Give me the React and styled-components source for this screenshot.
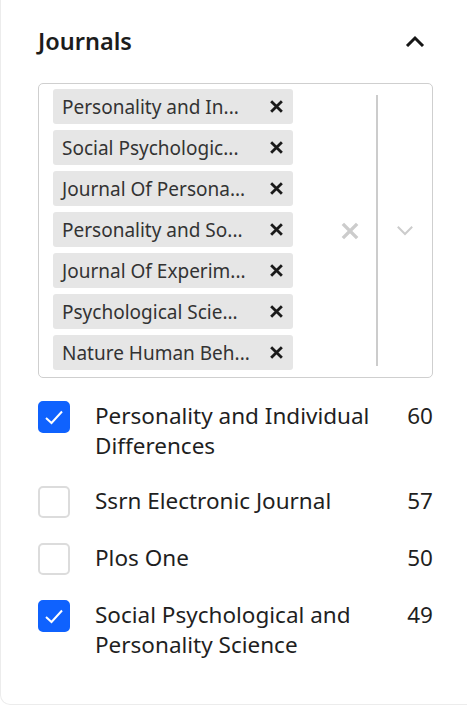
import styled, { createGlobalStyle } from "styled-components";

const GlobalStyle = createGlobalStyle`
  html, body {
    margin: 0;
    padding: 0;
    background: #fff;
    overflow: hidden;
  }
  body {
    font-family: "Noto Sans", "Open Sans", sans-serif;
  }
`;

const Card = styled.div`
  box-sizing: border-box;
  min-height: 705px;
  border-left: 1px solid #ececec;
  border-bottom: 1px solid #ececec;
  border-bottom-left-radius: 10px;
  padding: 27px 34px 0 37px;
`;

const Header = styled.div`
  display: flex;
  align-items: center;
  justify-content: space-between;
  padding-right: 8px;
  height: 28px;
`;

const Title = styled.h2`
  margin: 0;
  font-size: 23.5px;
  font-weight: 600;
  color: #1c1c1c;
  line-height: 28px;
`;

const IconButton = styled.button`
  display: flex;
  align-items: center;
  justify-content: center;
  border: none;
  background: none;
  padding: 0;
  cursor: pointer;
`;

const SelectBox = styled.div`
  margin-top: 28px;
  display: flex;
  border: 1px solid #cfcfcf;
  border-radius: 5px;
  background: #fff;
`;

const ValueContainer = styled.div`
  flex: 1;
  display: flex;
  flex-direction: column;
  align-items: flex-start;
  padding: 2px 14px 4px;
`;

const Chip = styled.div`
  display: flex;
  align-items: center;
  width: 240px;
  height: 35px;
  margin: 3px 0;
  border-radius: 3px;
  background: #e6e6e6;
  box-sizing: border-box;
`;

const ChipLabel = styled.span`
  flex: 1;
  padding-left: 9px;
  font-size: 19px;
  color: #333;
  white-space: nowrap;
  overflow: hidden;
`;

const ChipRemove = styled.span`
  width: 34px;
  display: flex;
  align-items: center;
  justify-content: center;
`;

const Indicator = styled.div`
  display: flex;
  align-items: center;
  justify-content: center;
  width: ${(p) => p.$width}px;
`;

const Separator = styled.span`
  align-self: stretch;
  width: 2px;
  margin: 11px 0;
  background: #cccccc;
`;

const List = styled.ul`
  list-style: none;
  margin: 23px 0 0;
  padding: 0;
  display: flex;
  flex-direction: column;
  gap: 25px;
`;

const Row = styled.li`
  display: flex;
  align-items: flex-start;
`;

const Box = styled.span`
  flex: none;
  box-sizing: border-box;
  width: 32px;
  height: 32px;
  border-radius: 5px;
  display: flex;
  align-items: center;
  justify-content: center;
  background: ${(p) => (p.$checked ? "#0f62fe" : "#fff")};
  border: 2px solid ${(p) => (p.$checked ? "#0f62fe" : "#dcdcdc")};
`;

const Label = styled.span`
  flex: 1;
  margin: 0 14px 0 25px;
  font-size: 22.5px;
  line-height: 30px;
  color: #1f1f1f;
`;

const Count = styled.span`
  font-size: 22.5px;
  line-height: 30px;
  color: #1f1f1f;
`;

const chips = [
  "Personality and In...",
  "Social Psychologic...",
  "Journal Of Persona...",
  "Personality and So...",
  "Journal Of Experim...",
  "Psychological Scie...",
  "Nature Human Beh...",
];

const journals = [
  { name: "Personality and Individual Differences", count: 60, checked: true },
  { name: "Ssrn Electronic Journal", count: 57, checked: false },
  { name: "Plos One", count: 50, checked: false },
  { name: "Social Psychological and Personality Science", count: 49, checked: true },
];

const SmallX = ({ color, size, weight }) => (
  <svg width={size} height={size} viewBox="0 0 14 14">
    <path d="M2 2 L12 12 M12 2 L2 12" stroke={color} strokeWidth={weight} fill="none" />
  </svg>
);

const Chevron = ({ up, color, width, weight }) => (
  <svg width={width} height={width * 0.6} viewBox="0 0 20 12">
    <path
      d={up ? "M2 11 L10 3 L18 11" : "M2 2 L10 10 L18 2"}
      stroke={color}
      strokeWidth={weight}
      fill="none"
    />
  </svg>
);

const Check = () => (
  <svg width="22" height="22" viewBox="0 0 22 22">
    <path d="M3 12 L8.5 17 L19 5.5" stroke="#fff" strokeWidth="2" fill="none" />
  </svg>
);

export default function App() {
  return (
    <>
      <GlobalStyle />
      <Card>
        <Header>
          <Title>Journals</Title>
          <IconButton aria-label="collapse">
            <Chevron up color="#161616" width={20} weight={3} />
          </IconButton>
        </Header>
        <SelectBox>
          <ValueContainer>
            {chips.map((c) => (
              <Chip key={c}>
                <ChipLabel>{c}</ChipLabel>
                <ChipRemove>
                  <SmallX color="#1a1a1a" size={15} weight={2.6} />
                </ChipRemove>
              </Chip>
            ))}
          </ValueContainer>
          <Indicator $width={52}>
            <SmallX color="#cccccc" size={20} weight={2.4} />
          </Indicator>
          <Separator />
          <Indicator $width={54}>
            <Chevron color="#cccccc" width={18} weight={2.2} />
          </Indicator>
        </SelectBox>
        <List>
          {journals.map((j) => (
            <Row key={j.name}>
              <Box $checked={j.checked}>{j.checked && <Check />}</Box>
              <Label>{j.name}</Label>
              <Count>{j.count}</Count>
            </Row>
          ))}
        </List>
      </Card>
    </>
  );
}
